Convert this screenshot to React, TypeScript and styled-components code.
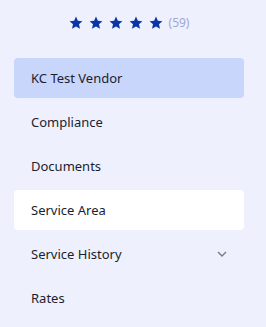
import React from "react";
import styled, { createGlobalStyle } from "styled-components";

const Global = createGlobalStyle`
  html, body { margin: 0; padding: 0; background: #eef1fd; }
  body { font-family: "Noto Sans", "Open Sans", sans-serif; }
`;

const Sidebar = styled.nav`
  width: 266px;
  height: 327px;
  background: #eef1fd;
  box-sizing: border-box;
  padding: 14px 22px 0 14px;
  display: flex;
  flex-direction: column;
`;

const Rating = styled.div`
  display: flex;
  align-items: center;
  justify-content: center;
  gap: 6px;
  height: 18px;
  margin-top: 0;
  margin-bottom: 26px;
`;

const Stars = styled.div`
  display: flex;
  gap: 6px;
`;

const Count = styled.span`
  font-size: 12px;
  line-height: 18px;
  color: #9ea6d3;
`;

const Menu = styled.ul`
  list-style: none;
  margin: 0;
  padding: 0;
  display: flex;
  flex-direction: column;
  gap: 4px;
`;

const Item = styled.li<{ $variant?: "active" | "hover" }>`
  height: 40px;
  display: flex;
  align-items: center;
  justify-content: space-between;
  padding: 0 17px;
  border-radius: 4px;
  font-size: 13px;
  color: #1b1e2e;
  background: ${(p) =>
    p.$variant === "active" ? "#c9d6fb" : p.$variant === "hover" ? "#ffffff" : "transparent"};
`;

const Star = () => (
  <svg width="14" height="14" viewBox="0 0 24 24">
    <path
      d="M12 1l3.2 7.2 7.8.7-5.9 5.2 1.8 7.7L12 17.8l-6.9 4 1.8-7.7L1 8.9l7.8-.7z"
      fill="#0b36a6"
    />
  </svg>
);

const Chevron = () => (
  <svg width="10" height="6" viewBox="0 0 10 6">
    <path d="M1 1l4 4 4-4" fill="none" stroke="#7a7a80" strokeWidth="1.4" />
  </svg>
);

const items: { label: string; variant?: "active" | "hover"; chevron?: boolean }[] = [
  { label: "KC Test Vendor", variant: "active" },
  { label: "Compliance" },
  { label: "Documents" },
  { label: "Service Area", variant: "hover" },
  { label: "Service History", chevron: true },
  { label: "Rates" },
];

export default function App() {
  return (
    <>
      <Global />
      <Sidebar>
        <Rating>
          <Stars>
            {[0, 1, 2, 3, 4].map((i) => (
              <Star key={i} />
            ))}
          </Stars>
          <Count>(59)</Count>
        </Rating>
        <Menu>
          {items.map((it) => (
            <Item key={it.label} $variant={it.variant}>
              <span>{it.label}</span>
              {it.chevron && <Chevron />}
            </Item>
          ))}
        </Menu>
      </Sidebar>
    </>
  );
}
